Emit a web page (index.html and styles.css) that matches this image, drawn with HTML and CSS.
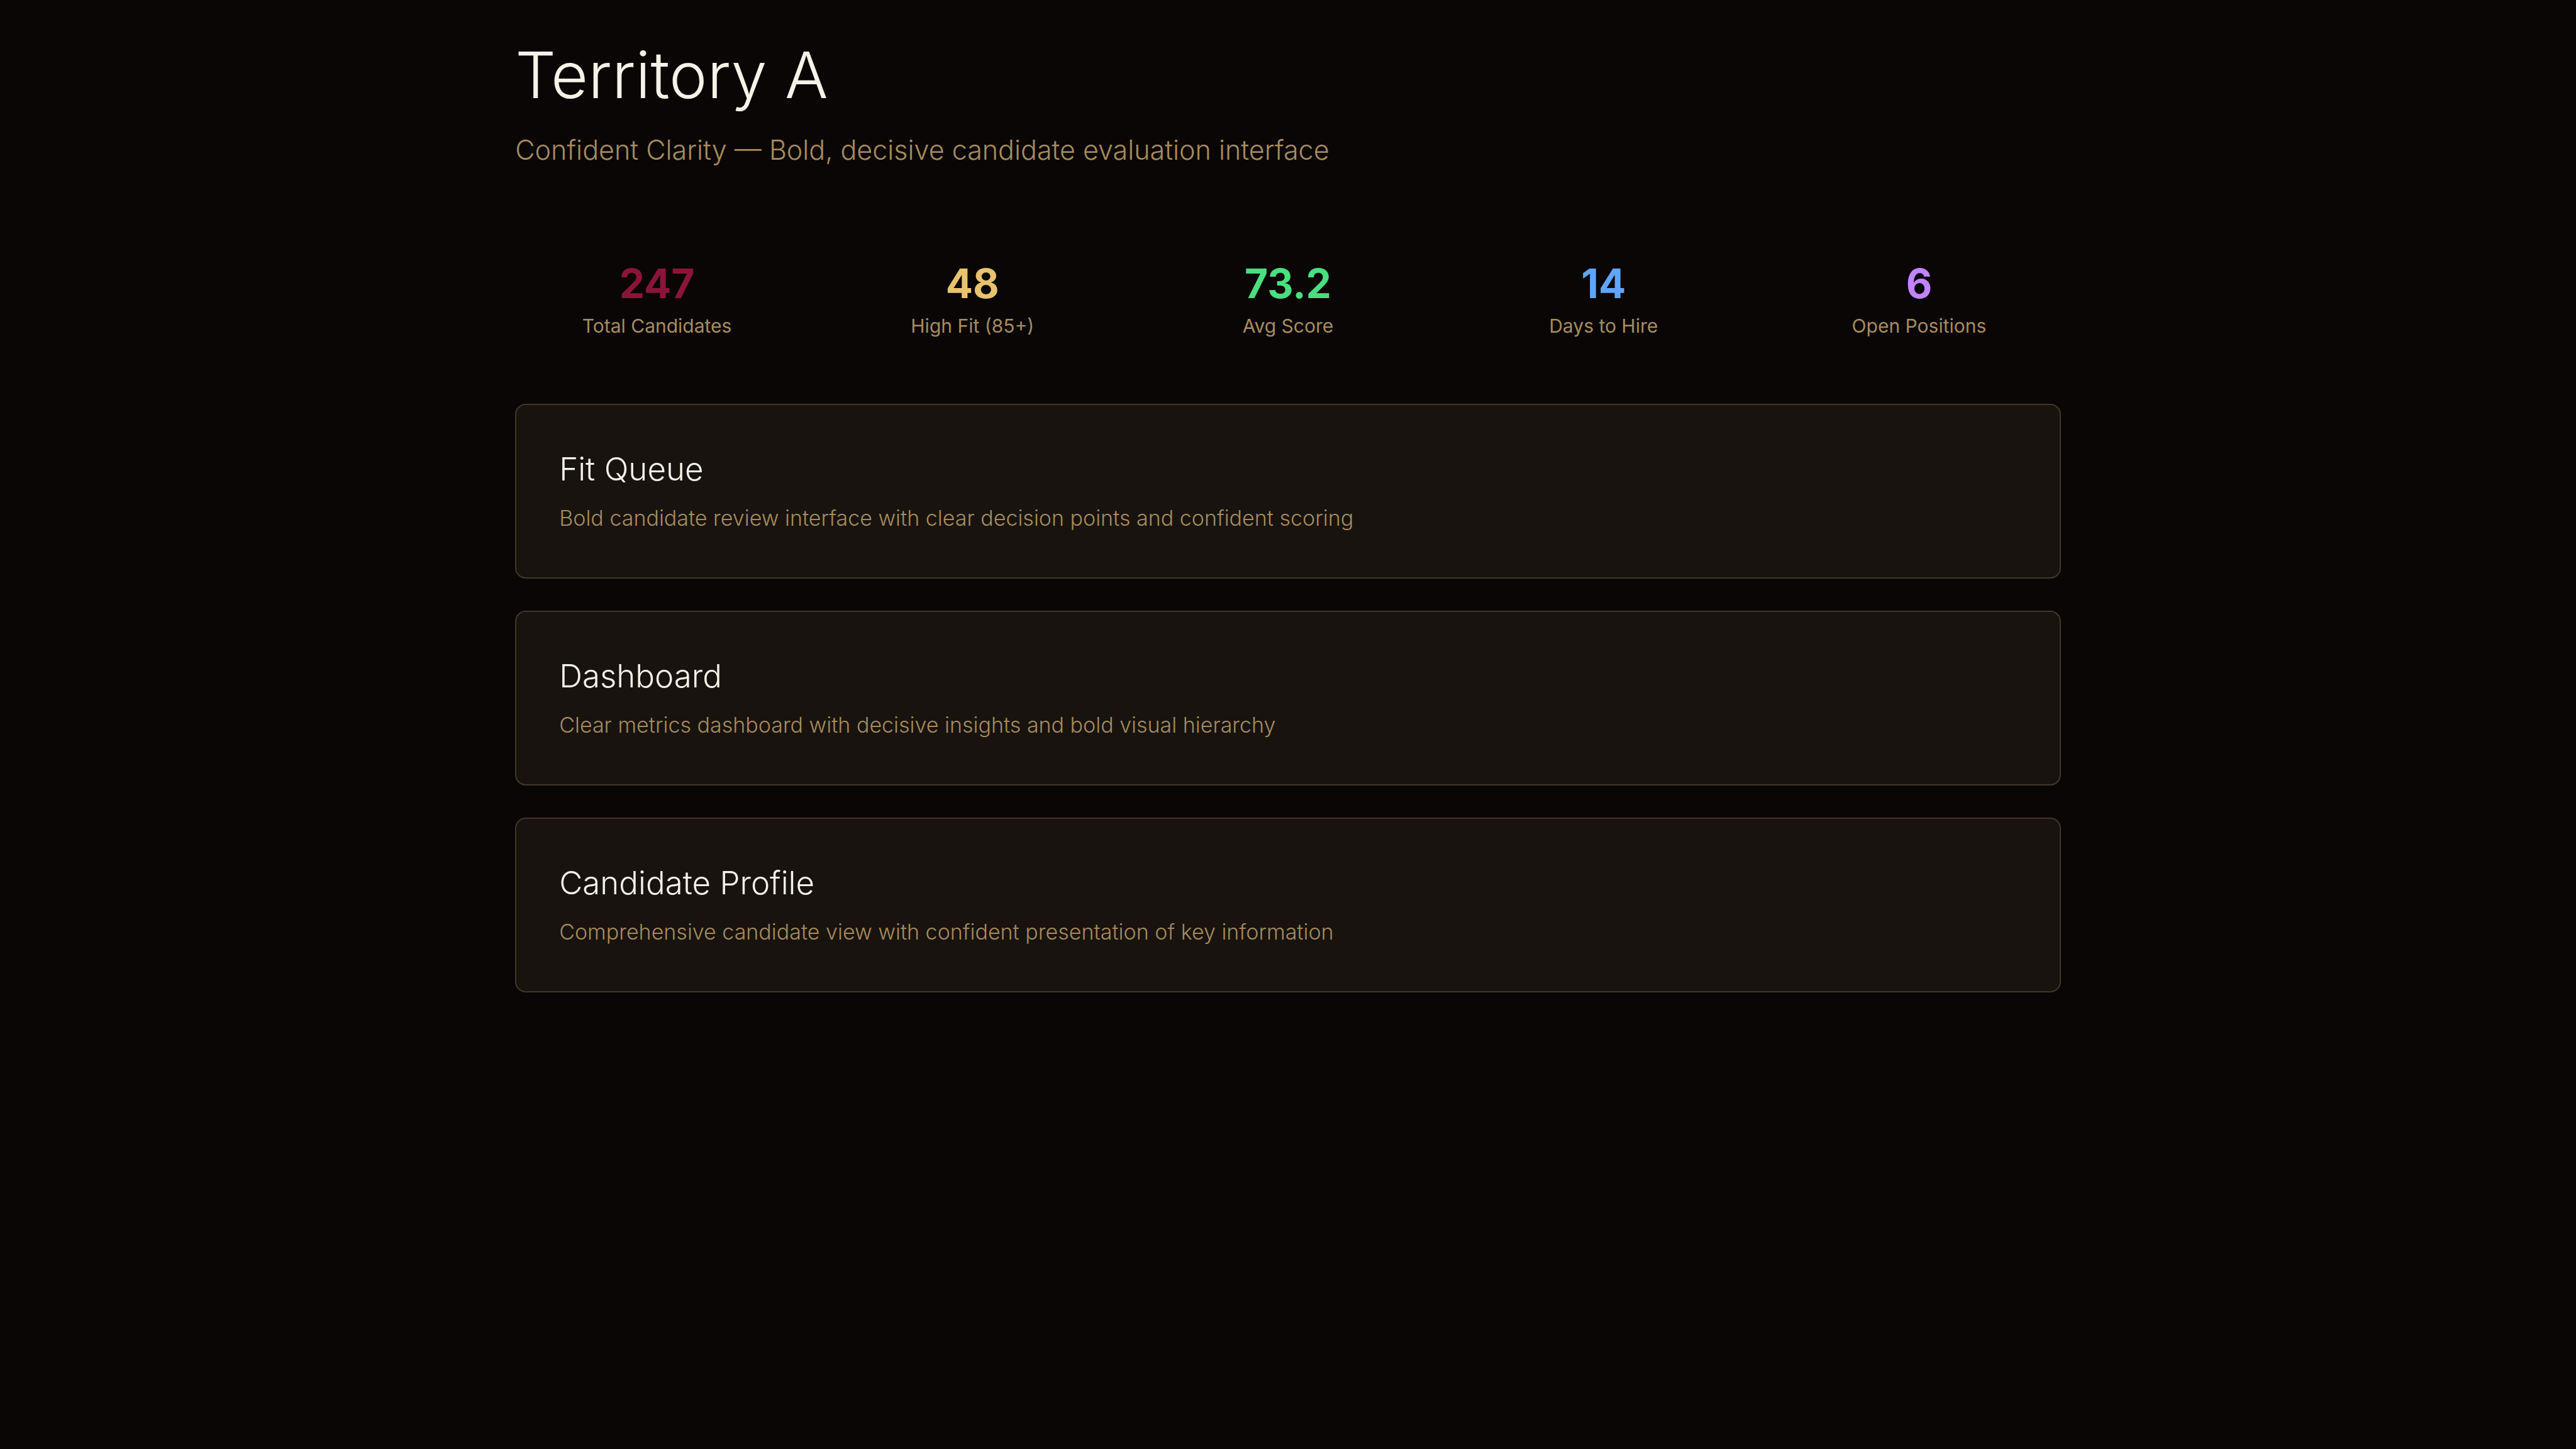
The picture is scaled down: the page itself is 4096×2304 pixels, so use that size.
FILE: index.html
```html
<!DOCTYPE html>
<html lang="en">
<head>
<meta charset="utf-8">
<meta name="viewport" content="width=device-width, initial-scale=1">
<title>Territory A</title>
<link rel="stylesheet" href="styles.css">
</head>
<body>
<main class="page">
  <header class="header">
    <h1 class="title">Territory A</h1>
    <p class="subtitle">Confident Clarity — Bold, decisive candidate evaluation interface</p>
  </header>

  <section class="stats">
    <div class="stat">
      <div class="stat-value crimson">247</div>
      <div class="stat-label">Total Candidates</div>
    </div>
    <div class="stat">
      <div class="stat-value gold">48</div>
      <div class="stat-label">High Fit (85+)</div>
    </div>
    <div class="stat">
      <div class="stat-value green">73.2</div>
      <div class="stat-label">Avg Score</div>
    </div>
    <div class="stat">
      <div class="stat-value blue">14</div>
      <div class="stat-label">Days to Hire</div>
    </div>
    <div class="stat">
      <div class="stat-value purple">6</div>
      <div class="stat-label">Open Positions</div>
    </div>
  </section>

  <nav class="cards">
    <a class="card" href="#fit-queue">
      <h2 class="card-title">Fit Queue</h2>
      <p class="card-text">Bold candidate review interface with clear decision points and confident scoring</p>
    </a>
    <a class="card" href="#dashboard">
      <h2 class="card-title">Dashboard</h2>
      <p class="card-text">Clear metrics dashboard with decisive insights and bold visual hierarchy</p>
    </a>
    <a class="card" href="#candidate-profile">
      <h2 class="card-title">Candidate Profile</h2>
      <p class="card-text">Comprehensive candidate view with confident presentation of key information</p>
    </a>
  </nav>
</main>
</body>
</html>
```
FILE: styles.css
```css
* {
  box-sizing: border-box;
  margin: 0;
  padding: 0;
}

body {
  min-height: 100vh;
  background: #0a0605;
  color: #f5f2e8;
  font-family: Inter, "Liberation Sans", sans-serif;
  font-weight: 300;
}

.page {
  width: 60%;
  margin: 0 auto;
  padding: 68px 0;
}

.header {
  margin-bottom: 106px;
}

.title {
  margin-bottom: 34px;
  font-size: 102px;
  line-height: 102px;
  font-weight: 300;
}

.subtitle {
  color: #a68c5d;
  font-size: 43px;
  line-height: 68px;
}

.stats {
  display: grid;
  grid-template-columns: repeat(5, 1fr);
  gap: 51px;
  margin-bottom: 68px;
}

.stat {
  padding: 34px 0;
  text-align: center;
}

.stat-value {
  margin-bottom: 8px;
  font-size: 64px;
  line-height: 77px;
  font-weight: 700;
}

.stat-label {
  color: #a68c5d;
  font-size: 30px;
  line-height: 43px;
  font-weight: 400;
}

.crimson { color: #8b1538; }
.gold { color: #e8c26e; }
.green { color: #4ade80; }
.blue { color: #60a5fa; }
.purple { color: #c084fc; }

.cards {
  display: grid;
  gap: 51px;
}

.card {
  display: block;
  padding: 68px;
  border: 2px solid #433726;
  border-radius: 17px;
  background: #18130e;
  color: inherit;
  text-decoration: none;
}

.card-title {
  margin-bottom: 18px;
  font-size: 51px;
  line-height: 68px;
  font-weight: 300;
}

.card-text {
  color: #a68c5d;
  font-size: 34px;
  line-height: 52px;
}
```
